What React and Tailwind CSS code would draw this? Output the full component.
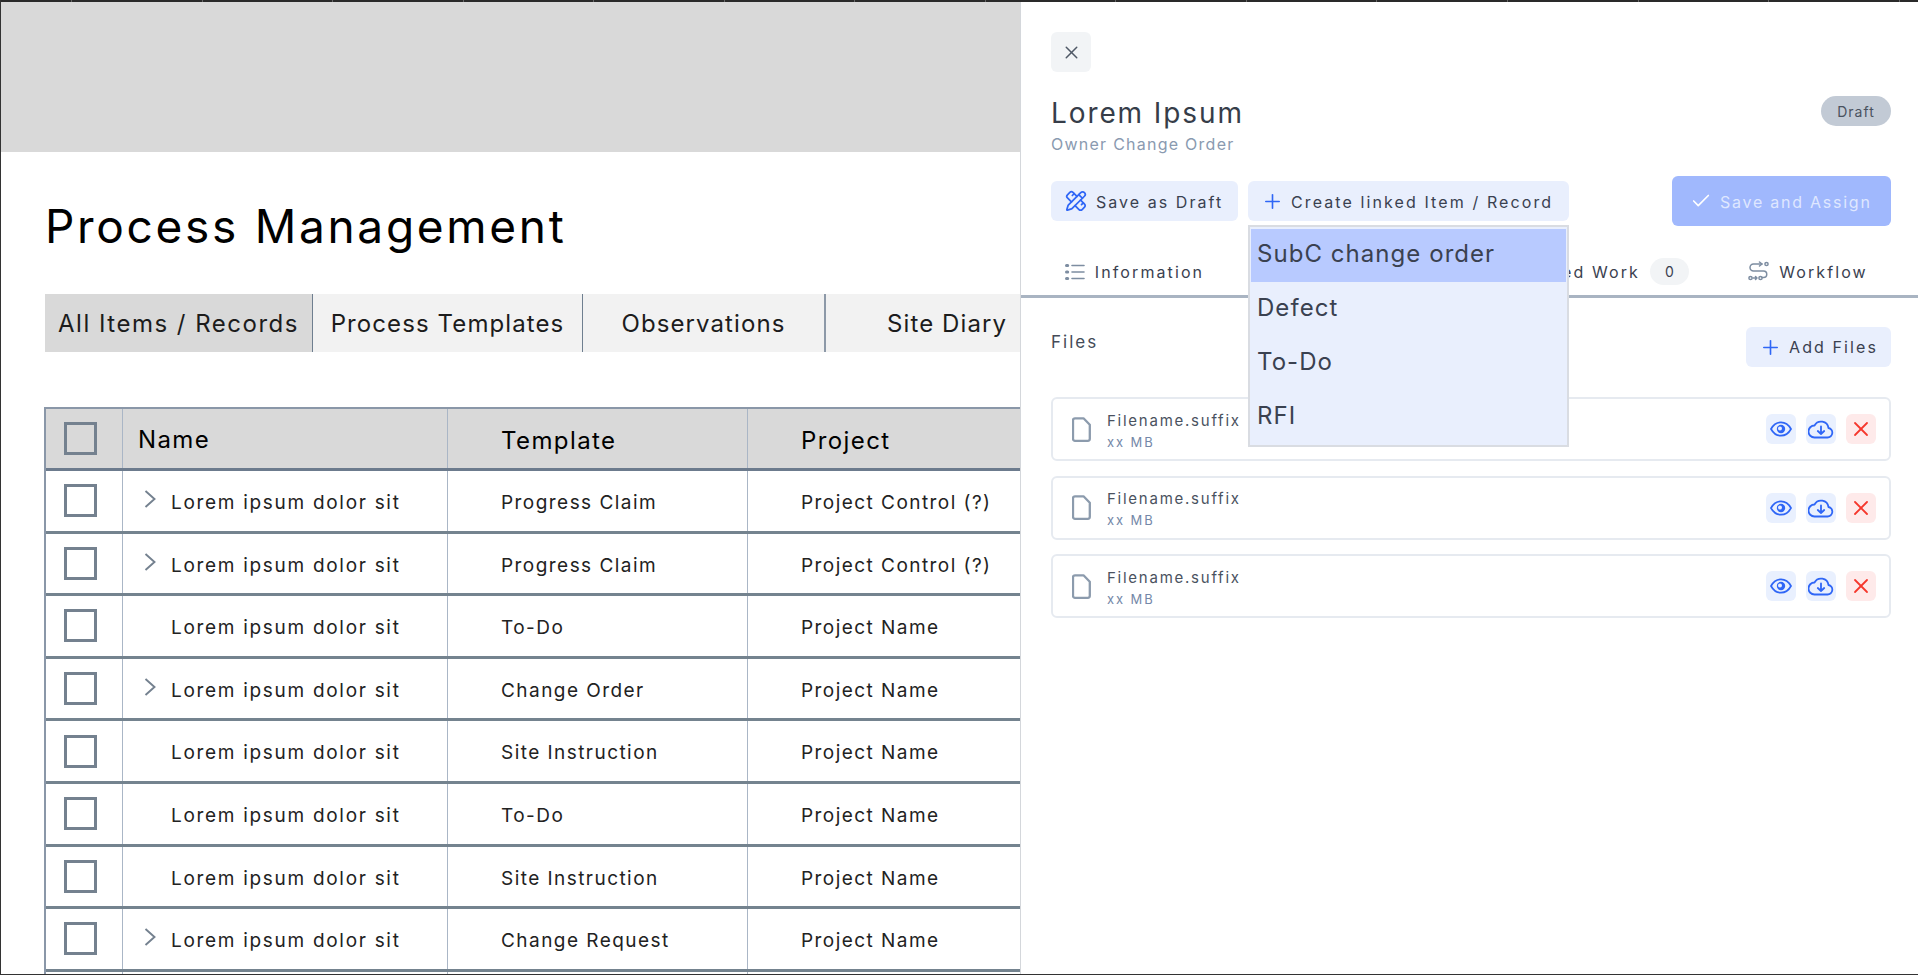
import React from "react";
import { X, Plus, Check, PencilRuler } from "lucide-react";

const rows = [
  [true, "Progress Claim", "Project Control (?)"],
  [true, "Progress Claim", "Project Control (?)"],
  [false, "To-Do", "Project Name"],
  [true, "Change Order", "Project Name"],
  [false, "Site Instruction", "Project Name"],
  [false, "To-Do", "Project Name"],
  [false, "Site Instruction", "Project Name"],
  [true, "Change Request", "Project Name"],
  [false, "", ""],
];

function ListIcon() {
  return (
    <svg width="20" height="18" viewBox="0 0 20 18" fill="none" stroke="#7d8da1" strokeWidth="1.6" strokeLinecap="round">
      <path d="M7 2.5h12M7 9h12M7 15.5h12" />
      <path d="M1.500 2.500h1.200M1.500 9h1.200M1.500 15.500h1.200" strokeWidth="3" />
    </svg>
  );
}

function WorkflowIcon() {
  return (
    <svg width="21" height="21" viewBox="0 0 21 21" fill="none" stroke="#7d8da1" strokeWidth="1.5" strokeLinecap="round" strokeLinejoin="round">
      <path d="M14 3H5.500a3.200 3.200 0 0 0 0 7h10a3 3 0 0 1 0 6.500H14" />
      <path d="M11.500 1l2.500 2-2.500 2" />
      <circle cx="18.500" cy="3" r="1.600" />
      <circle cx="12.500" cy="17" r="1.600" />
      <circle cx="2.500" cy="17" r="1.600" />
      <path d="M5 17h4M7.500 15.500L9 17l-1.500 1.500" />
    </svg>
  );
}

function EyeIcon() {
  return (
    <svg width="22" height="16" viewBox="0 0 22 16" fill="none" stroke="#2f66f6" strokeWidth="1.7">
      <path d="M1 8c2.400-4.400 5.700-6.700 10-6.700S18.600 3.600 21 8c-2.400 4.400-5.700 6.700-10 6.700S3.400 12.400 1 8z" />
      <circle cx="11" cy="8" r="4.200" fill="#2f66f6" stroke="none" />
      <circle cx="10" cy="7.500" r="2" fill="#e9f0fe" stroke="none" />
    </svg>
  );
}

function CloudIcon() {
  return (
    <svg width="26" height="20" viewBox="0 0 26 20" fill="none" stroke="#2f66f6" strokeWidth="1.8" strokeLinecap="round" strokeLinejoin="round">
      <path d="M6.500 18.500h13a4.800 4.800 0 0 0 1-9.500 7.500 7.500 0 0 0-14-2.500 6 6 0 0 0 0 12z" />
      <path d="M13 7.500v7.500M9.800 12l3.200 3 3.200-3" />
    </svg>
  );
}

function DocIcon() {
  return (
    <svg width="19" height="25" viewBox="0 0 19 25" fill="none" stroke="#8c9bad" strokeWidth="2.300" strokeLinejoin="round" className="shrink-0">
      <path d="M3 1.300h8.500l6.300 6.500v14a2 2 0 0 1-2 2H3a2 2 0 0 1-2-2V3.300a2 2 0 0 1 2-2z" />
    </svg>
  );
}

function Chevron() {
  return (
    <svg width="12" height="18" viewBox="0 0 12 18" fill="none" stroke="#74818f" strokeWidth="1.900" className="block">
      <path d="M1.500 1l9 8-9 8" />
    </svg>
  );
}

function Checkbox() {
  return <div className="w-[33px] h-[33px] border-[3px] border-[#74818f]" />;
}

function FileCard() {
  return (
    <div className="h-[64px] border-2 border-[#e6eaf0] rounded-md flex items-center pl-[19px] pr-[13px]">
      <DocIcon />
      <div className="ml-[16px] flex flex-col pt-[2px]">
        <span className="text-[15px] leading-[20px] tracking-[1.750px] text-[#4a5260]">Filename.suffix</span>
        <span className="mt-[3px] text-[13px] leading-[16px] tracking-[1.900px] text-[#7488a8]">xx MB</span>
      </div>
      <div className="ml-auto flex gap-[10px]">
        <div className="w-[30px] h-[30px] rounded-md bg-[#e9f0fe] flex items-center justify-center"><EyeIcon /></div>
        <div className="w-[30px] h-[30px] rounded-md bg-[#e9f0fe] flex items-center justify-center"><CloudIcon /></div>
        <div className="w-[30px] h-[30px] rounded-md bg-[#feeaea] flex items-center justify-center"><X size={24} strokeWidth={1.800} className="text-[#f5372c]" /></div>
      </div>
    </div>
  );
}

export default function App() {
  return (
    <div className="relative h-[975px] w-full overflow-hidden bg-white font-['Inter','Noto_Sans',sans-serif] text-black border-l border-b border-[#333]">
      <div className="h-[2px] flex bg-[#2a2a2a]">
        <div className="w-[71px] h-full border-r border-[#666] shrink-0" />
        {Array.from({ length: 14 }).map((_, i) => (
          <div key={i} className="w-[130.55px] h-full border-r border-[#666] shrink-0" />
        ))}
      </div>
      <div className="h-[150px] bg-[#d9d9d9]" />

      <div className="pl-[44px] w-[1019px] overflow-hidden">
        <h1 className="mt-[46px] h-[56px] w-fit text-[46px] leading-[56px] font-normal tracking-[2.700px]">Process Management</h1>

        <div className="mt-[40px] flex h-[58px] text-[24px] tracking-[1.100px] text-[#1c1c1c]">
          <div className="w-[268px] shrink-0 bg-[#d9d9d9] border-r border-[#6f7f90] flex items-center justify-center pt-[2px] tracking-[1.500px]">All Items / Records</div>
          <div className="w-[270px] shrink-0 bg-[#f2f2f2] border-r border-[#6f7f90] flex items-center justify-center pt-[2px]">Process Templates</div>
          <div className="w-[243px] shrink-0 bg-[#f2f2f2] border-r-2 border-[#8d99a8] flex items-center justify-center pt-[2px]">Observations</div>
          <div className="w-[250px] shrink-0 bg-[#f2f2f2] flex items-center pl-[61px] pt-[2px]">Site Diary</div>
        </div>

        <div className="mt-[55px] -ml-[1px] border-t-2 border-l-2 border-[#8a97a8]">
          <div className="h-[62px] bg-[#d9d9d9] border-b-[3px] border-[#6c7b8d] flex text-[24px] tracking-[1.400px]">
            <div className="w-[77px] border-r border-[#aab6c6] flex items-center pl-[18px] shrink-0"><Checkbox /></div>
            <div className="w-[325px] border-r border-[#aab6c6] flex items-center pl-[15px] pt-[3px] shrink-0">Name</div>
            <div className="w-[300px] border-r border-[#aab6c6] flex items-center pl-[53px] pt-[4px] shrink-0">Template</div>
            <div className="flex items-center pl-[53px] pt-[4px]">Project</div>
          </div>
          {rows.map(([chev, tpl, prj], i) => (
            <div key={i} className="h-[62.6px] border-b-[3px] border-[#74838f] flex text-[19px] tracking-[1.700px] text-[#222]">
              <div className="w-[77px] border-r border-[#aab6c6] flex items-center pl-[18px] shrink-0"><Checkbox /></div>
              <div className="w-[325px] border-r border-[#aab6c6] flex items-center pl-[21px] shrink-0">
                <div className="w-[27px] shrink-0 -mt-[3px]">
                  {chev && <Chevron />}
                </div>
                <span className="pt-[5px]">{i === 8 ? "" : "Lorem ipsum dolor sit"}</span>
              </div>
              <div className="w-[300px] border-r border-[#aab6c6] flex items-center pl-[53px] pt-[5px] shrink-0 tracking-[1.450px]">{tpl}</div>
              <div className="flex items-center pl-[53px] pt-[5px] whitespace-nowrap tracking-[1.450px]">{prj}</div>
            </div>
          ))}
        </div>
      </div>

      <aside className="absolute top-[2px] left-[1019px] right-0 bottom-0 bg-white border-l border-[#d4d7db] text-[#3a4150]">
        <div className="pt-[30px] pr-[27px] pl-[30px]">
          <button className="w-[40px] h-[40px] rounded-md bg-[#f2f4f6] flex items-center justify-center">
            <X size={21} strokeWidth={1.700} className="text-[#4f5866]" />
          </button>

          <div className="mt-[23px] flex items-start justify-between">
            <div>
              <div className="text-[28px] leading-[36px] tracking-[1.900px] text-[#363d49]">Lorem Ipsum</div>
              <div className="mt-[2px] text-[16px] leading-[22px] tracking-[1.250px] text-[#8a9ab0]">Owner Change Order</div>
            </div>
            <div className="mt-[1px] w-[70px] h-[30px] rounded-full bg-[#c2cad5] flex items-center justify-center text-[14px] tracking-[1px] text-[#4a5260]">Draft</div>
          </div>

          <div className="mt-[21px] flex items-center h-[50px]">
            <button className="w-[187px] h-[40px] rounded-md bg-[#e9effd] flex items-center pl-[14px] text-[16px] tracking-[2.050px] text-[#3a4150] whitespace-nowrap">
              <PencilRuler size={22} strokeWidth={1.900} className="text-[#2f66f6] mr-[9px]" />
              <span className="pt-[1px]">Save as Draft</span>
            </button>
            <button className="ml-[10px] w-[321px] h-[40px] rounded-md bg-[#e9effd] flex items-center pl-[13px] text-[16px] tracking-[2.100px] text-[#3a4150] whitespace-nowrap">
              <Plus size={23} strokeWidth={1.700} className="text-[#2f66f6] mr-[7px]" />
              <span className="pt-[1px]">Create linked Item / Record</span>
            </button>
            <button className="ml-auto w-[219px] h-[50px] rounded-md bg-[#a0b8fd] flex items-center pl-[18px] text-[16px] tracking-[1.750px] text-[#dfe7ff] whitespace-nowrap">
              <Check size={22} strokeWidth={1.800} className="text-white mr-[8px]" />
              <span className="pt-[1px]">Save and Assign</span>
            </button>
          </div>
        </div>

        <div className="mt-[19px] flex h-[53px] border-b-[3px] border-[#a9b4c2] text-[16px] tracking-[2.100px] text-[#3a4150]">
          <div className="w-[227px] flex items-center justify-center gap-[10px] pt-[3px]"><ListIcon />Information</div>
          <div className="w-[225px] border-b-[3px] border-[#2f66f6] h-[53px] flex items-center justify-center pt-[3px]">Files</div>
          <div className="w-[225px] flex items-center justify-end pr-[9px] pt-[3px] whitespace-nowrap">
            Related Work
            <span className="ml-[10px] w-[39px] h-[27px] rounded-full bg-[#f2f4f6] flex items-center justify-center text-[14px] tracking-normal">0</span>
          </div>
          <div className="flex-1 flex items-center justify-center gap-[10px] pt-[3px]"><WorkflowIcon />Workflow</div>
        </div>

        <div className="pr-[27px] pl-[30px]">
          <div className="mt-[29px] h-[40px] flex items-center justify-between">
            <span className="-mt-[8px] text-[17px] tracking-[2px] text-[#444b58]">Files</span>
            <button className="w-[145px] h-[40px] rounded-md bg-[#e9effd] flex items-center pl-[13px] text-[16px] tracking-[2.100px] text-[#3a4150] whitespace-nowrap">
              <Plus size={23} strokeWidth={1.700} className="text-[#2f66f6] mr-[7px]" />
              Add Files
            </button>
          </div>
          <div className="mt-[30px] flex flex-col gap-[14.500px]">
            <FileCard />
            <FileCard />
            <FileCard />
          </div>
        </div>

        <div className="absolute top-[223px] left-[227px] w-[321px] h-[222px] bg-[#e9effd] border-2 border-[#d9dce2] p-[1px] pt-[2px] text-[24px] tracking-[1.050px] text-[#3a4150]">
          <div className="h-[53px] bg-[#b8caff] flex items-center pl-[6px] pb-[4px]">SubC change order</div>
          <div className="h-[54px] flex items-center pl-[6px] pb-[2px]">Defect</div>
          <div className="h-[54px] flex items-center pl-[6px] pb-[2px]">To-Do</div>
          <div className="h-[53px] flex items-center pl-[6px] pb-[2px]">RFI</div>
        </div>
      </aside>
    </div>
  );
}
